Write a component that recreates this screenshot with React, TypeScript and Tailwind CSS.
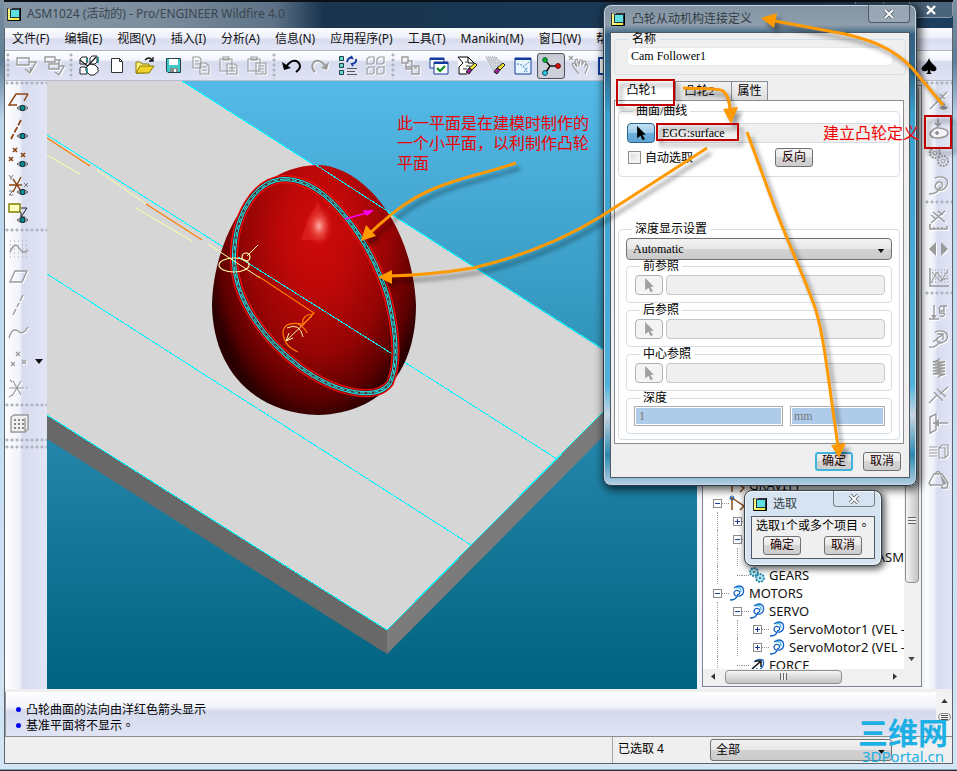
import React from "react";

const ui = "font-['Noto_Sans','Noto_Sans_CJK_SC',sans-serif]";
const ming = "font-['Liberation_Serif','Noto_Sans_CJK_SC',serif]";

type IconProps = { children: React.ReactNode };

function Icon({ children }: IconProps) {
  return (
    <svg viewBox="0 0 22 22" className="h-[22px] w-[22px] shrink-0" fill="none">
      {children}
    </svg>
  );
}

/** Disabled, embossed line icon. */
function Gray({ d, fill, w = 1.4 }: { d: string; fill?: string; w?: number }) {
  return (
    <Icon>
      <g transform="translate(1 1)" stroke="#fff" strokeWidth={w}>
        <path d={d} />
        {fill && <path d={fill} fill="#fff" stroke="none" />}
      </g>
      <g stroke="#9b9b9b" strokeWidth={w}>
        <path d={d} />
        {fill && <path d={fill} fill="#9b9b9b" stroke="none" />}
      </g>
    </Icon>
  );
}

function Eye() {
  return (
    <g>
      <path d="M9 17Q14.500 12 20 17Q14.500 22 9 17Z" fill="#e4e4e4" stroke="#555" strokeWidth="1" />
      <circle cx="14.5" cy="17" r="2.6" fill="#009090" stroke="#123" strokeWidth="1" />
    </g>
  );
}

function WindowMark() {
  return (
    <svg viewBox="0 0 14 14" className="h-[14px] w-[14px] shrink-0">
      <rect x="0.5" y="1.5" width="12" height="12" fill="#f6ee4c" stroke="#333" />
      <path d="M2 1V13M4 1V13" stroke="#fff" strokeWidth="1" strokeDasharray="1 1" />
      <rect x="3.5" y="2.5" width="9" height="8" fill="#5fe0e0" stroke="#234" />
      <path d="M13.5 1V13.5H1" stroke="#000" fill="none" />
    </svg>
  );
}

function ToolButton({ label, children, active = false }: { label: string; children: React.ReactNode; active?: boolean }) {
  return (
    <button
      type="button"
      aria-label={label}
      className={
        active
          ? "flex h-[26px] w-7 shrink-0 items-center justify-center rounded-[3px] border border-[#50545e] bg-[#cdd0d8] shadow-inner"
          : "flex h-7 w-7 shrink-0 items-center justify-center"
      }
    >
      {children}
    </button>
  );
}

function VGrip() {
  return (
    <div className="h-[26px] w-[7px] shrink-0 bg-[radial-gradient(circle_at_3px_2px,#b0b4be_1px,transparent_2px)] bg-[length:7px_5px]" />
  );
}

function HGrip() {
  return (
    <div className="h-[7px] w-full shrink-0 bg-[radial-gradient(circle_at_2px_2px,#b0b4be_1px,transparent_2px)] bg-[length:5px_7px]" />
  );
}

const menus = ["文件(F)", "编辑(E)", "视图(V)", "插入(I)", "分析(A)", "信息(N)", "应用程序(P)", "工具(T)", "Manikin(M)", "窗口(W)", "帮助(H)"];

function TitleBar() {
  return (
    <header className="flex h-[28px] items-start justify-between border-t-2 border-[#0b0f16] bg-[linear-gradient(90deg,#8496a6_0,#7c8d9d_150px,#5d7287_270px,#18344f_320px,#1d3f5e_100%)]">
      <div className="flex h-6 items-center gap-[6px] pl-[3px]">
        <WindowMark />
        <h1 className="text-[12px] leading-4 whitespace-nowrap text-[#3b4650]">ASM1024 (活动的) - Pro/ENGINEER Wildfire 4.0</h1>
      </div>
      <div className="flex h-4 overflow-hidden rounded-b border border-t-0 border-[#8b9bab] text-white">
        <button type="button" aria-label="最小化" className="w-7 border-r border-[#8b9bab] bg-[#34516b]" />
        <button type="button" aria-label="最大化" className="w-[26px] border-r border-[#8b9bab] bg-[#34516b]" />
        <button type="button" aria-label="关闭" className="flex w-[42px] items-center justify-center bg-[#4a647c]">
          <svg viewBox="0 0 12 10" className="h-[10px] w-3">
            <path d="M2 1L10 9M10 1L2 9" stroke="#fff" strokeWidth="2.4" />
          </svg>
        </button>
      </div>
    </header>
  );
}

function MenuBar() {
  return (
    <nav className="flex h-[23px] items-center gap-[15px] overflow-hidden border-b border-[#adb1c0] bg-[linear-gradient(#fbfcff,#eef0fa_45%,#d8dcee_50%,#e4e7f6)] pl-[7px]">
      {menus.map((m) => (
        <button key={m} type="button" className="text-[12px] leading-4 whitespace-nowrap text-[#111]">
          {m}
        </button>
      ))}
    </nav>
  );
}

function ToolBar() {
  return (
    <div className="flex h-[30px] items-center border-b border-[#b9bccb] bg-[linear-gradient(#fff,#f3f5fc_30%,#d6dbee_38%,#dfe3f4)]">
      <VGrip />
      <ToolButton label="选择">
        <Gray d="M2 3H14V10H2ZM14 7H21L15 18L10 14M15 18L16 12" />
      </ToolButton>
      <ToolButton label="多选">
        <Gray d="M2 2H12V7H2ZM6 9H16V14H6ZM12 5H17L15 9M16 11H21L16 20L12 17" />
      </ToolButton>
      <VGrip />
      <ToolButton label="拖动元件">
        <Icon>
          <path d="M4 2H9V8L7 9H2V4ZM14 1H19V7L17 9H12V3ZM3 12H7L9 14V19H2V13Z" fill="#fff" stroke="#222" />
          <path d="M2 5L12 13M18 2L9 12" stroke="#222" strokeWidth="1.3" />
          <path d="M8 13L12 9L17 10L20 13V17L16 20H12L8 16Z" fill="#fff" stroke="#222" />
          <path d="M20 2V8M9 13V18M9 3V7" stroke="#008080" strokeWidth="1.5" />
        </Icon>
      </ToolButton>
      <ToolButton label="新建">
        <Icon>
          <path d="M5.500 3.500H13.500L16.500 6.500V17.500H5.500Z" fill="#fff" stroke="#333" />
          <path d="M13.500 3.500V6.500H16.500" stroke="#333" />
        </Icon>
      </ToolButton>
      <ToolButton label="打开">
        <Icon>
          <path d="M2 7H6L8 9H15V12L11 18H2Z" fill="#fff27c" stroke="#8b7a00" />
          <path d="M6 11H20L15 18H2Z" fill="#efd32c" stroke="#8b7a00" />
          <path d="M11 5Q15 1 18 5M19 2V6H15" stroke="#111" strokeWidth="1.3" />
        </Icon>
      </ToolButton>
      <ToolButton label="保存">
        <Icon>
          <path d="M4.500 3.500H18.500V17.500H6L4.500 16Z" fill="#3ccaca" stroke="#244" />
          <path d="M7 4H16V10H7Z" fill="#fff" />
          <path d="M8 13H16V17H8Z" fill="#8a8a8a" />
          <path d="M12 14H14V17H12Z" fill="#fff" />
        </Icon>
      </ToolButton>
      <ToolButton label="复制">
        <Gray w={1.1} d="M3 2H9L11 4V13H3ZM5 6H9M5 9H9M10 8H16L19 11V19H10ZM12 12H17M12 15H17" />
      </ToolButton>
      <ToolButton label="粘贴">
        <Gray w={1.1} d="M2 4H14V16H2ZM5 2H11V5H5ZM9 9H17L19 11V19H9ZM11 13H17M11 16H17" />
      </ToolButton>
      <ToolButton label="选择性粘贴">
        <Gray w={1.1} d="M2 4H14V16H2ZM5 2H11V5H5ZM10 8H20V19H10ZM12 11H13M15 11H18M12 14H13M15 14H18M12 17H13M15 17H18" />
      </ToolButton>
      <VGrip />
      <ToolButton label="撤消">
        <Icon>
          <path d="M5 12Q11 3 17 7Q22 12 15 17" stroke="#000" strokeWidth="2" />
          <path d="M1 7L3 15L10 13Z" fill="#000" />
        </Icon>
      </ToolButton>
      <ToolButton label="重做">
        <Gray d="M17 12Q11 3 5 7Q1 12 6 17" fill="M20 7L18 15L12 13Z" w={2} />
      </ToolButton>
      <ToolButton label="再生">
        <Icon>
          <path d="M2.500 1.500H6.500V5.500H2.500ZM2.500 8.500H6.500V12.500H2.500ZM2.500 15.500H6.500V19.500H2.500Z" fill="#62d8d8" stroke="#244" />
          <path d="M10 7Q11 2 15 3L14 1M19 4Q20 8 15 9L16 11" stroke="#14389c" strokeWidth="2" />
          <path d="M10 13.500H20M10 16.500H18M10 19.500H20" stroke="#555" />
        </Icon>
      </ToolButton>
      <ToolButton label="再生管理器">
        <Gray w={1.2} d="M4 2H9V8L7 9H2V4ZM14 2H19V8L17 9H12V4ZM4 12H9V18L7 19H2V14ZM14 12H19V18L17 19H12V14Z" />
      </ToolButton>
      <VGrip />
      <ToolButton label="视图管理">
        <Gray d="M2 2H8V8H2ZM8 6H12V14H6V8M6 12H12M12 11H19V19H12ZM14 13H17" />
      </ToolButton>
      <ToolButton label="窗口">
        <Icon>
          <path d="M2 3H16V13H2Z" fill="#fff" stroke="#113a9a" />
          <path d="M2 4H16" stroke="#113a9a" strokeWidth="2" />
          <path d="M6 7H20V19H6Z" fill="#fff" stroke="#113a9a" />
          <path d="M6 8H20" stroke="#113a9a" strokeWidth="2" />
          <path d="M9 13L12 16L17 11" stroke="#0a8a1a" strokeWidth="2" />
        </Icon>
      </ToolButton>
      <ToolButton label="重画">
        <Icon>
          <path d="M2 2H12L18 8V11L10 19H2Z" fill="#fff" stroke="none" />
          <path d="M2 2H12L18 8H12V2M2 2L7 8L3 12V19H11" stroke="#000" />
          <path d="M9 7H11M10 11H14M7 14H11" stroke="#333" />
          <path d="M19 8L21 10L16 15L13 13Z" fill="#f2e32c" stroke="#222" />
          <path d="M13 13L16 15L13 19L10 17Z" fill="#a020a0" stroke="#222" />
        </Icon>
      </ToolButton>
      <ToolButton label="清除">
        <Icon>
          <path d="M2 2H12L18 8L11 18Z" fill="#d3d6df" stroke="#999" strokeDasharray="1 1" />
          <path d="M5 5H13M7 8H16M9 11H14M10 14H12" stroke="#aaa" strokeDasharray="1 1" />
          <path d="M19 8L21 10L16 15L13 13Z" fill="#f2e32c" stroke="#222" />
          <path d="M13 13L16 15L13 19L10 17Z" fill="#a020a0" stroke="#222" />
        </Icon>
      </ToolButton>
      <ToolButton label="定向">
        <Icon>
          <path d="M3 3H19V19H3Z" fill="#e8f4ff" stroke="#113a9a" />
          <path d="M3 4H19" stroke="#113a9a" strokeWidth="2" />
          <path d="M5 9Q12 9 15 17M17 7L10 13M12 17L16 12" stroke="#3c86c8" strokeDasharray="2 1" />
        </Icon>
      </ToolButton>
      <ToolButton label="旋转中心" active>
        <Icon>
          <path d="M5 5L10 11H18M10 11L6 17" stroke="#111" strokeWidth="1.5" />
          <circle cx="5" cy="5" r="2.4" fill="#10b020" stroke="#064" />
          <circle cx="18" cy="11" r="2.4" fill="#e01010" stroke="#600" />
          <circle cx="5" cy="18" r="2.4" fill="#30d0e0" stroke="#046" />
        </Icon>
      </ToolButton>
      <ToolButton label="拖动">
        <Gray w={1.2} d="M1 1L5 5M5 1L1 5M11 19L6 13L4 9L6 8L9 12L7 5L9 4L11 10L12 5H14V10L16 6L18 7L17 11L19 9L20 11L17 19" />
      </ToolButton>
      <ToolButton label="图层">
        <Icon>
          <path d="M3 3H19V19H3Z" fill="#fff" stroke="#113a9a" strokeWidth="2" />
        </Icon>
      </ToolButton>
      <div className="flex-1" />
      <button type="button" aria-label="黑桃" className="mr-[15px]">
        <svg viewBox="0 0 16 16" className="h-4 w-4">
          <path d="M8 0Q9 4 14 8Q17 11 14 13Q11 14 9 12Q9 15 11 16H5Q7 15 7 12Q5 14 2 13Q-1 11 2 8Q7 4 8 0Z" fill="#000" />
        </svg>
      </button>
    </div>
  );
}

function LeftBar() {
  return (
    <aside className="flex w-[42px] shrink-0 flex-col bg-[linear-gradient(90deg,#fff,#f0f2fb_35%,#d8dcef_42%,#e2e5f6)]">
      <HGrip />
      <ToolButton label="基准平面">
        <Icon>
          <path d="M20 3H8L1 14H9M20 3L16 10" stroke="#8b4513" strokeWidth="1.5" />
          <Eye />
        </Icon>
      </ToolButton>
      <ToolButton label="基准轴">
        <Icon>
          <path d="M13 1L3 20" stroke="#8b4513" strokeWidth="1.8" strokeDasharray="6 2" />
          <Eye />
        </Icon>
      </ToolButton>
      <ToolButton label="基准点">
        <Icon>
          <path d="M5 1L9 5M9 1L5 5M1 10L5 14M5 10L1 14M13 6L17 10M17 6L13 10" stroke="#8b4513" strokeWidth="1.6" />
          <Eye />
        </Icon>
      </ToolButton>
      <ToolButton label="坐标系">
        <Icon>
          <path d="M1 10H14M13 2L5 17M5 4L13 16" stroke="#8b4513" strokeWidth="1.4" />
          <path d="M1 0L3 3L5 0M3 3V5M1 16H5L1 20H5M16 8L20 12M20 8L16 12" stroke="#777" />
          <Eye />
        </Icon>
      </ToolButton>
      <ToolButton label="注释">
        <Icon>
          <path d="M1 1H12V9H1Z" fill="#ffffc0" stroke="#7d7d00" strokeWidth="1.4" />
          <path d="M13 5H19L13 14M13 9V14H17" stroke="#222" />
          <Eye />
        </Icon>
      </ToolButton>
      <HGrip />
      <ToolButton label="草绘">
        <Icon>
          <path d="M2 3H20M2 7H20M2 11H20M2 15H20M2 19H20" stroke="#a5a5a5" strokeDasharray="1 3" />
          <path d="M2 14Q7 3 11 10T20 12" stroke="#9b9b9b" strokeWidth="1.5" />
        </Icon>
      </ToolButton>
      <ToolButton label="平面">
        <Gray d="M7 5H19L14 16H2Z" />
      </ToolButton>
      <ToolButton label="轴">
        <Gray d="M15 1L12 7M11 9L9 13M8 15L5 21" />
      </ToolButton>
      <ToolButton label="曲线">
        <Gray d="M1 16Q4 5 10 9Q15 14 20 5" />
      </ToolButton>
      <div className="flex items-center">
        <ToolButton label="点">
          <Gray d="M8 2L12 6M12 2L8 6M3 12L7 16M7 12L3 16M14 10L18 14M18 10L14 14" />
        </ToolButton>
        <svg viewBox="0 0 8 5" className="ml-[2px] h-[5px] w-2">
          <path d="M0 0H8L4 5Z" fill="#111" />
        </svg>
      </div>
      <ToolButton label="坐标">
        <Gray d="M1 10H16M13 3L4 18M5 3L13 17M2 2L4 4M18 10H20M1 19L4 17" w={1.2} />
      </ToolButton>
      <HGrip />
      <ToolButton label="分析">
        <Icon>
          <path d="M3 4L6 2H20V16L17 19H3ZM17 5V19" stroke="#999" strokeWidth="1.4" fill="#f0f0f0" />
          <path d="M6 7H16M6 11H16M6 15H16" stroke="#888" strokeWidth="2" strokeDasharray="2 2" />
        </Icon>
      </ToolButton>
      <HGrip />
      <HGrip />
    </aside>
  );
}

function RightBar() {
  return (
    <aside className="flex w-[27px] shrink-0 flex-col items-center bg-[linear-gradient(90deg,#fff,#eceffa_35%,#d8dcef_45%,#e2e5f6)]">
      <HGrip />
      <ToolButton label="机构显示">
        <Gray d="M19 1L2 18M6 4L17 14M12 3L17 8" fill="M11 17Q15 12 20 17Q15 21 11 17" />
      </ToolButton>
      <ToolButton label="凸轮">
        <Icon>
          <path d="M10 0V7M7 4L10 7L13 4" stroke="#999" strokeWidth="1.6" />
          <path d="M4 12Q7 8 11 9Q20 10 20 14Q19 19 9 19Q3 19 2 15Q2 13 4 12Z" fill="#f4f4f8" stroke="#999" strokeWidth="1.5" />
          <path d="M7 14H11M9 12V16" stroke="#999" strokeWidth="2" />
        </Icon>
      </ToolButton>
      <ToolButton label="齿轮">
        <Icon>
          <circle cx="7" cy="6" r="5" stroke="#999" strokeWidth="2" strokeDasharray="2 1" />
          <circle cx="7" cy="6" r="2" stroke="#999" />
          <circle cx="15" cy="14" r="5" stroke="#999" strokeWidth="2" strokeDasharray="2 1" />
          <circle cx="15" cy="14" r="2" stroke="#999" />
        </Icon>
      </ToolButton>
      <ToolButton label="伺服电动机">
        <Gray d="M1 19Q10 19 12 12M7 3Q15 0 19 5Q21 12 14 15Q8 16 7 11Q9 5 14 8Q16 12 11 14" />
      </ToolButton>
      <HGrip />
      <ToolButton label="机构分析">
        <Gray w={1.6} d="M2 14V19H19V16M6 17V19M10 17V19M14 17V19M17 1L3 13M5 2L17 12M10 1L15 5M3 5L8 9" />
      </ToolButton>
      <ToolButton label="回放">
        <Gray d="" fill="M8 4V18L1 11ZM13 4V18L20 11Z" w={1} />
      </ToolButton>
      <ToolButton label="测量">
        <Icon>
          <path d="M2 2V20H21" stroke="#999" strokeWidth="1.5" />
          <path d="M4 4H20M4 7H20M4 10H20M4 13H20M4 16H20" stroke="#999" strokeDasharray="1 2" />
          <path d="M3 17L9 6L14 14L20 4M4 6L12 15L20 12" stroke="#999" />
        </Icon>
      </ToolButton>
      <HGrip />
      <ToolButton label="重力">
        <Gray d="M6 4V17M1 18H11M19 5H13Q10 8 12 10H16V5M12 10Q10 13 16 12Q18 16 12 15" fill="M3 14H9L6 18Z" />
      </ToolButton>
      <ToolButton label="执行电动机">
        <Gray d="M1 18Q9 19 12 12M7 3Q15 0 19 5Q21 12 13 14Q8 13 9 9M5 13L14 6M9 5H15V11" />
      </ToolButton>
      <ToolButton label="弹簧">
        <Gray d="M11 1V3L5 5H17L5 8H17L5 11H17L5 14H17L5 17H17L11 19V21" />
      </ToolButton>
      <ToolButton label="阻尼器">
        <Gray d="M1 18L9 10M6 7L15 16M9 4L18 12M12 9L20 2" />
      </ToolButton>
      <ToolButton label="力">
        <Gray d="M2 4L8 1V17L2 20ZM5 10H20" fill="M6 10L11 6V14Z" />
      </ToolButton>
      <ToolButton label="初始条件">
        <Gray d="M11 7L14 4H20V14L17 17H11ZM11 7H17V17M1 6H9M1 9H9M1 12H9M1 15H9" w={1.1} />
      </ToolButton>
      <ToolButton label="质量属性">
        <Gray d="M3 17L1 14L6 5H14L20 14L19 19H14V16H3M7 5Q10 0 13 5" fill="M12 5L19 15L15 16Z" />
      </ToolButton>
    </aside>
  );
}

const band =
  "M285 179C330 180 372 245 388 298C397 335 398 365 390 383C378 400 340 396 300 367C262 338 236 300 234 262C233 215 255 180 285 179Z";

function Viewport() {
  return (
    <svg viewBox="47 81 650 608" preserveAspectRatio="xMinYMin slice" className="h-full min-w-0 flex-1" fill="none">
      <defs>
        <linearGradient id="sky" x1="0" y1="0" x2="0" y2="1">
          <stop offset="0" stopColor="#56bae8" />
          <stop offset="1" stopColor="#00627f" />
        </linearGradient>
        <radialGradient id="egg" gradientUnits="userSpaceOnUse" cx="318" cy="232" r="190" gradientTransform="translate(318 232) scale(.6 1) translate(-318 -232)">
          <stop offset="0" stopColor="#cf0b0b" />
          <stop offset=".3" stopColor="#bf0808" />
          <stop offset=".65" stopColor="#940404" />
          <stop offset=".88" stopColor="#5c0000" />
          <stop offset="1" stopColor="#2a0000" />
        </radialGradient>
        <radialGradient id="shine">
          <stop offset="0" stopColor="#ffb0a8" />
          <stop offset=".4" stopColor="#ee5048" stopOpacity=".8" />
          <stop offset="1" stopColor="#cf0b0b" stopOpacity="0" />
        </radialGradient>
      </defs>
      <path d="M47 81H697V689H47Z" fill="url(#sky)" />
      <path d="M47 81H182L697 410V317L387 630L47 415Z" fill="#d6d6d6" />
      <path d="M47 415L387 630V654L47 439Z" fill="#686868" />
      <path d="M387 630L697 317V342L387 654Z" fill="#7b7b7b" />
      <g stroke="#00ffff" strokeWidth="1" shapeRendering="crispEdges">
        <path d="M182 81L697 409M47 415L387 630L697 317" />
        <path d="M47 135L557 459M47 274L471 545" />
      </g>
      <path d="M318 165C362 166 412 222 416 305C416 368 384 413 318 415C252 413 213 368 212 305C213 248 246 166 318 165Z" fill="url(#egg)" />
      <path d="M318 202L328 226L324 240L301 240L308 220Z" fill="#e22a24" opacity=".6" />
      <ellipse cx="319" cy="226" rx="15" ry="22" fill="url(#shine)" />
      <path d="M316 165L392 214M232 253L394 355" stroke="#00f0f8" shapeRendering="crispEdges" />
      <path d={band} stroke="#ff1010" strokeWidth="8" />
      <path d={band} stroke="#8c0606" strokeWidth="6" />
      <path d={band} stroke="#14f0f4" strokeWidth="4" />
      <path d={band} stroke="#5a1414" strokeWidth="2" />
      <path d={band} stroke="#14f0f4" strokeWidth="1" strokeDasharray="5 2" />
      <g stroke="#ffffa8" strokeWidth="1">
        <path d="M47 155L80 174M97 170L146 204M136 208L192 241M208 244L260 278M247 256L258 245" />
        <ellipse cx="234" cy="265" rx="15" ry="7" strokeWidth="1.2" />
        <circle cx="246" cy="257" r="4" strokeWidth="1.2" />
        <path d="M286 341L312 316M287 328Q300 322 303 337M286 341L293 338M286 341L289 333" />
      </g>
      <g stroke="#ff7f00" strokeWidth="1.2">
        <path d="M47 138L90 166M146 204L202 240M258 276L314 313L303 325Q301 315 313 314M302 324Q285 321 283 331Q283 346 298 352M298 324Q305 328 307 333" />
      </g>
      <path d="M345 219L370 212M364 211L372 211L367 215Z" stroke="#ff00ff" strokeWidth="1.3" />
    </svg>
  );
}

function MotorIcon() {
  return (
    <svg viewBox="0 0 16 16" className="h-4 w-4 shrink-0" fill="none" stroke="#1464c8" strokeWidth="1.3">
      <path d="M1 15Q7 15 8 11M5 3Q11 -1 14 3Q16 9 11 11Q5 12 5 8Q6 4 10 6Q12 9 8 10" />
      <path d="M7 3Q12 1 12 7" stroke="#4db6e8" />
    </svg>
  );
}

function GearIcon() {
  return (
    <svg viewBox="0 0 16 16" className="h-4 w-4 shrink-0" fill="none">
      <circle cx="5" cy="5" r="4" fill="#a8e4f0" stroke="#167aa0" strokeWidth="1.6" strokeDasharray="2 1" />
      <circle cx="11" cy="11" r="4" fill="#a8e4f0" stroke="#167aa0" strokeWidth="1.6" strokeDasharray="2 1" />
      <path d="M5 4V6M11 10V12" stroke="#024" />
    </svg>
  );
}

function ForceIcon() {
  return (
    <svg viewBox="0 0 16 16" className="h-4 w-4 shrink-0" fill="none">
      <path d="M1 15Q7 15 8 11M5 5Q9 1 14 3Q16 9 11 12" stroke="#1464c8" strokeWidth="1.3" />
      <path d="M3 12L11 5M6 4H12V10" stroke="#111" strokeWidth="1.5" />
    </svg>
  );
}

function LinkIcon() {
  return (
    <svg viewBox="0 0 16 16" className="h-4 w-4 shrink-0" fill="none">
      <path d="M3 3V15M1 3H5M3 3L15 11L11 15" stroke="#8a4a12" strokeWidth="1.5" />
      <circle cx="3" cy="3" r="2" stroke="#1464c8" />
    </svg>
  );
}

function Toggle({ open }: { open: boolean }) {
  return (
    <button type="button" aria-label={open ? "折叠" : "展开"} className="flex h-[9px] w-[9px] shrink-0 items-center justify-center border border-[#8c8c8c] bg-white">
      <svg viewBox="0 0 5 5" className="h-[5px] w-[5px] shrink-0" shapeRendering="crispEdges">
        <path d={open ? "M0 2H5V3H0Z" : "M0 2H2V0H3V2H5V3H3V5H2V3H0Z"} fill="#1a3c9a" />
      </svg>
    </button>
  );
}

type Row = { indent: number; toggle?: boolean; icon: React.ReactNode; text: string; end?: boolean };

const rows: Row[] = [
  { indent: 0, icon: <LinkIcon />, text: "GRAVITY" },
  { indent: 0, toggle: true, icon: <LinkIcon />, text: "" },
  { indent: 1, toggle: false, icon: <LinkIcon />, text: "" },
  { indent: 1, toggle: true, icon: <LinkIcon />, text: "" },
  { indent: 2, icon: <MotorIcon />, text: "ASM", end: true },
  { indent: 1, icon: <GearIcon />, text: "GEARS" },
  { indent: 0, toggle: true, icon: <MotorIcon />, text: "MOTORS" },
  { indent: 1, toggle: true, icon: <MotorIcon />, text: "SERVO" },
  { indent: 2, toggle: false, icon: <MotorIcon />, text: "ServoMotor1 (VEL - ASM)" },
  { indent: 2, toggle: false, icon: <MotorIcon />, text: "ServoMotor2 (VEL - ASM)" },
  { indent: 1, icon: <ForceIcon />, text: "FORCE" },
];

const guide = "w-5 shrink-0 self-stretch bg-[linear-gradient(#999,#999)]";

function ModelTree() {
  return (
    <section className="flex w-[228px] shrink-0 flex-col bg-[#f2f4fb] pt-1 pr-[3px] pb-[2px] pl-[5px]">
      <div className="grid min-h-0 flex-1 grid-cols-[1fr_15px] grid-rows-[1fr_15px] border border-[#808590] bg-[#f0f0f0] pr-[2px] pb-[2px]">
        <div className="flex min-h-0 min-w-0 flex-col justify-end overflow-hidden bg-white">
          <ul className="-mb-[5px]">
            {rows.map((r, i) => (
              <li key={i} className="flex h-[18px] items-center pl-[10px]">
                {Array.from({ length: r.indent }, (_, n) => (
                  <span key={n} className="w-5 shrink-0 self-stretch pl-1">
                    <span className={n === 0 || i < 10 ? "block h-full w-px border-l border-dotted border-[#a0a0a0]" : guide} />
                  </span>
                ))}
                {r.toggle === undefined ? <span className="ml-1 w-[5px] shrink-0 border-b border-dotted border-[#909090]" /> : <Toggle open={r.toggle} />}
                <span className="w-[7px] shrink-0 border-b border-dotted border-[#909090]" />
                {r.icon}
                <span className={r.end ? "ml-auto text-[13px] leading-[18px] text-[#111]" : "ml-1 text-[13px] leading-[18px] whitespace-nowrap text-[#111]"}>{r.text}</span>
              </li>
            ))}
          </ul>
        </div>
        <div className="flex flex-col items-center justify-end bg-[#f0f0f0]">
          <div className="flex min-h-0 w-[14px] flex-1 items-end justify-center rounded-sm border border-[#8f8f8f] bg-[linear-gradient(90deg,#f6f6f6,#dcdcdc_50%,#c4c4c4)]">
            <span className="mb-[58px] h-[7px] w-2 bg-[repeating-linear-gradient(#666_0_1px,#eee_1px_3px)]" />
          </div>
          <svg viewBox="0 0 8 5" className="mt-[74px] mb-2 h-[4px] w-[7px]">
            <path d="M0 0H8L4 5Z" fill="#444" />
          </svg>
        </div>
        <div className="flex items-center pl-2">
          <svg viewBox="0 0 5 8" className="h-[7px] w-[4px]">
            <path d="M5 0V8L0 4Z" fill="#333" />
          </svg>
          <div className="ml-[10px] flex h-[14px] w-[117px] items-center justify-center rounded-sm border border-[#8f8f8f] bg-[linear-gradient(#f6f6f6,#dcdcdc_50%,#c4c4c4)]">
            <span className="h-[7px] w-[7px] bg-[repeating-linear-gradient(90deg,#666_0_1px,#eee_1px_3px)]" />
          </div>
          <svg viewBox="0 0 5 8" className="mr-[7px] ml-auto h-[7px] w-[4px]">
            <path d="M0 0V8L5 4Z" fill="#333" />
          </svg>
        </div>
      </div>
    </section>
  );
}

function Messages() {
  return (
    <section className="mt-[3px] flex h-[44px] shrink-0 border-l border-[#9a9a9a] bg-[linear-gradient(#fff,#f1f3fb_35%,#d5daec_42%,#e0e4f4)]">
      <ul className="flex-1 pt-[9px] pl-[10px] text-[12px] leading-4 text-black">
        {["凸轮曲面的法向由洋红色箭头显示", "基准平面将不显示。"].map((t) => (
          <li key={t} className="flex items-center gap-[5px]">
            <i className="h-[5px] w-[5px] rounded-full bg-[#0000f0]" />
            <span className="font-['Noto_Sans_CJK_TC',sans-serif]">{t}</span>
          </li>
        ))}
      </ul>
      <div className="flex w-4 flex-col items-center gap-[10px] bg-[#f2f2f2] pt-[7px]">
        <svg viewBox="0 0 8 5" className="h-[4px] w-[7px]">
          <path d="M0 5H8L4 0Z" fill="#333" />
        </svg>
        <span className="flex h-2 w-[13px] items-center justify-center rounded-sm border border-[#888]">
          <i className="h-[5px] w-[7px] bg-[repeating-linear-gradient(#555_0_1px,#eee_1px_2px)]" />
        </span>
      </div>
    </section>
  );
}

function StatusBar() {
  return (
    <footer className="flex h-[27px] shrink-0 items-center border-t border-[#8c8c8c] bg-[#efefef]">
      <div className="flex-1" />
      <output className="flex h-full w-[98px] items-center border-l border-[#a5a5a5] pb-[3px] pl-[5px] text-[12px] leading-4 text-black">已选取 4</output>
      <label className="relative mr-[60px] flex h-[22px] w-[182px]">
        <span className="sr-only">过滤器</span>
        <select className="h-full w-full appearance-none rounded-[3px] border border-[#707070] bg-[linear-gradient(#f3f3f3,#e6e6e6_50%,#d2d2d2_50%,#cacaca)] pl-[5px] text-[12px] leading-4 text-black">
          <option>全部</option>
        </select>
        <svg viewBox="0 0 8 5" className="pointer-events-none absolute top-[11px] right-[7px] h-[4px] w-[7px]">
          <path d="M0 0H8L4 5Z" fill="#111" />
        </svg>
      </label>
    </footer>
  );
}

function CloseGlyph() {
  return (
    <svg viewBox="0 0 12 10" className="h-[10px] w-3">
      <path d="M2 1L10 9M10 1L2 9" stroke="#5a6570" strokeWidth="3.6" />
      <path d="M2 1L10 9M10 1L2 9" stroke="#fff" strokeWidth="1.8" />
    </svg>
  );
}

function PushButton({ children, primary = false }: { children: React.ReactNode; primary?: boolean }) {
  return (
    <button
      type="button"
      className={
        primary
          ? "h-[19px] w-[38px] rounded-[3px] border-2 border-[#3eb4dc] bg-[linear-gradient(#f0f0f0,#e4e4e4_50%,#d0d0d0_50%,#cfcfcf)] text-[12px] leading-[15px] text-[#200]"
          : "h-[19px] w-[38px] rounded-[3px] border border-[#707070] bg-[linear-gradient(#f3f3f3,#e9e9e9_50%,#d6d6d6_50%,#cdcdcd)] text-[12px] leading-[17px] text-[#200]"
      }
    >
      {children}
    </button>
  );
}

function PickButton({ active = false, label }: { active?: boolean; label: string }) {
  return (
    <button
      type="button"
      aria-label={label}
      disabled={!active}
      className={
        active
          ? "flex h-5 w-7 shrink-0 items-center justify-center rounded-sm border border-[#2c628b] bg-[linear-gradient(#c2e0f4,#9ccbea_50%,#6cb0de_50%,#5fa4d4)]"
          : "flex h-5 w-7 shrink-0 items-center justify-center rounded-sm border border-[#adb2b5] bg-[#f4f4f4]"
      }
    >
      <svg viewBox="0 0 10 16" className="h-[14px] w-[9px]">
        <path d="M0 0L10 10H6L9 15L6 16L4 11L0 14Z" fill={active ? "#000" : "#a0a0a0"} />
      </svg>
    </button>
  );
}

function RefGroup({ title, id }: { title: string; id: string }) {
  return (
    <fieldset className="mb-px h-[43px] min-w-0 rounded border border-[#d5dfe5] pr-[6px] pl-2">
      <legend className="ml-[5px] px-[3px] text-[12px] leading-3">{title}</legend>
      <div className="mt-[3px] flex gap-[3px]">
        <PickButton label={title} />
        <input id={id} aria-label={title} disabled className="h-5 min-w-0 flex-1 rounded-sm border border-[#c3c8cc] bg-[#efefef]" />
      </div>
    </fieldset>
  );
}

function CamDialog() {
  return (
    <section
      role="dialog"
      aria-label="凸轮从动机构连接定义"
      className={`absolute top-1 left-[603px] w-[314px] rounded-lg border border-[#2b3a48] bg-[linear-gradient(#8293a3_0,#8e9eac_20px,#35607f_30px,#2f6d93_70px,#39a0cc_110px,#4fb2dc_380px,#c9d6e2_410px,#2b88b0_450px,#b5cfe4_100%)] px-[6px] pb-[7px] shadow-[inset_0_0_0_1px_#c6d5e2,2px_2px_8px_2px_rgba(0,0,0,0.65)] ${ming}`}
    >
      <div className="flex h-[27px] items-start justify-between">
        <div className={`flex h-[27px] items-center gap-[7px] pl-[1px] ${ui}`}>
          <WindowMark />
          <h2 className="text-[12px] leading-4 text-[#343c44]">凸轮从动机构连接定义</h2>
        </div>
        <button type="button" aria-label="关闭" className="flex h-[18px] w-[42px] items-center justify-center rounded-b border border-t-0 border-[#4f5c68] bg-[#a5b2be]/60">
          <CloseGlyph />
        </button>
      </div>
      <div className="border border-[#505a64] bg-[#efefef] px-[3px] pb-[6px] text-[12px] text-black">
        <fieldset className="h-[42px] min-w-0 rounded border border-[#d5dfe5] px-3">
          <legend className="ml-[2px] px-[3px] text-[12px] leading-3">名称</legend>
          <input aria-label="名称" defaultValue="Cam Follower1" className="mt-[2px] block h-[19px] w-full rounded-sm border border-[#e3e9ef] bg-white px-[3px] text-[12px] leading-4" />
        </fieldset>
        <div role="tablist" className="mt-[5px] flex h-5 items-end pl-[2px]">
          <button role="tab" aria-selected="true" type="button" className="h-5 w-[59px] bg-white pr-[8px] text-[12px] leading-4">凸轮1</button>
          <button role="tab" aria-selected="false" type="button" className="h-[19px] w-[57px] border border-b-0 border-[#898c95] bg-[linear-gradient(#f2f2f2,#ddd)] pr-[8px] text-[12px] leading-4">凸轮2</button>
          <button role="tab" aria-selected="false" type="button" className="h-[19px] w-[36px] border border-b-0 border-l-0 border-[#898c95] bg-[linear-gradient(#f2f2f2,#ddd)] text-[12px] leading-4">属性</button>
        </div>
        <div role="tabpanel" className="mr-[2px] border border-[#898c95] bg-white px-[3px] pt-1 pb-[3px]">
          <fieldset className="h-[72px] min-w-0 rounded border border-[#d5dfe5] pr-2 pl-2">
            <legend className="ml-[6px] px-[3px] text-[12px] leading-3">曲面/曲线</legend>
            <div className="mt-[6px] flex gap-[2px]">
              <PickButton active label="选取曲面" />
              <input aria-label="曲面/曲线" readOnly value="EGG:surface" className="h-5 min-w-0 flex-1 rounded-sm border border-[#d5dbe2] bg-[#f0f0f0] px-1 text-[12px] leading-4" />
            </div>
            <div className="mt-[5px] flex items-center">
              <label className="flex w-[148px] items-center gap-1 leading-4">
                <input type="checkbox" className="ml-[1px] h-[13px] w-[13px] appearance-none border border-[#8e8f8f] bg-[linear-gradient(135deg,#cfd3d8,#fff)] shadow-[inset_0_0_0_2px_#f4f4f4]" />
                自动选取
              </label>
              <PushButton>反向</PushButton>
            </div>
          </fieldset>
          <fieldset className="mt-[46px] min-w-0 rounded border border-[#d5dfe5] px-[7px] pb-[5px]">
            <legend className="ml-[6px] px-[3px] text-[12px] leading-3">深度显示设置</legend>
            <div className="relative mt-[3px]">
              <select aria-label="深度显示设置" className="block h-[22px] w-full appearance-none rounded-sm border border-[#707070] bg-[linear-gradient(#f3f3f3,#e6e6e6_50%,#d4d4d4_50%,#cacaca)] pl-[6px] text-[12px] leading-4">
                <option>Automatic</option>
              </select>
              <svg viewBox="0 0 8 5" className="pointer-events-none absolute top-[11px] right-[7px] h-[4px] w-2">
                <path d="M0 0H8L4 5Z" fill="#111" />
              </svg>
            </div>
            <RefGroup title="前参照" id="front" />
            <RefGroup title="后参照" id="back" />
            <RefGroup title="中心参照" id="center" />
            <fieldset className="h-[42px] min-w-0 rounded border border-[#d5dfe5] pr-[6px] pl-[7px]">
              <legend className="ml-[6px] px-[3px] text-[12px] leading-3">深度</legend>
              <div className="mt-[2px] flex gap-[7px]">
                <input aria-label="深度" disabled value="1" className="h-5 w-[149px] border border-[#abadb3] bg-[#aecbea] px-1 text-[12px] leading-4 text-[#777] shadow-[inset_0_0_0_1px_#fff]" />
                <input aria-label="单位" disabled value="mm" className="h-5 min-w-0 flex-1 border border-[#abadb3] bg-[#aecbea] px-[3px] text-[12px] leading-4 text-[#777] shadow-[inset_0_0_0_1px_#fff]" />
              </div>
            </fieldset>
          </fieldset>
        </div>
        <div className="mt-2 flex justify-end gap-[10px] pr-[5px]">
          <PushButton primary>确定</PushButton>
          <PushButton>取消</PushButton>
        </div>
      </div>
    </section>
  );
}

function SelectDialog() {
  return (
    <section
      role="dialog"
      aria-label="选取"
      className="absolute top-[490px] left-[744px] w-[138px] rounded-lg border border-[#39434c] bg-[#d6e4f1] px-[6px] pb-[6px] shadow-[inset_0_0_0_1px_#f3f8fc,2px_2px_7px_1px_rgba(0,0,0,0.65)]"
    >
      <div className="flex h-[25px] items-start justify-between">
        <div className={`flex h-[25px] items-center gap-[6px] pl-[2px] ${ui}`}>
          <WindowMark />
          <h2 className="text-[12px] leading-4 text-[#343c44]">选取</h2>
        </div>
        <button type="button" aria-label="关闭" className="flex h-4 w-[42px] items-center justify-center rounded-b border border-t-0 border-[#76828e]">
          <CloseGlyph />
        </button>
      </div>
      <div className={`border border-[#505a64] bg-[#efefef] pb-[3px] ${ming}`}>
        <p className="pl-1 text-[12px] leading-4 whitespace-nowrap text-black">
          选取1个或多个项目<span className="font-['Noto_Sans_CJK_TC',sans-serif]">。</span>
        </p>
        <div className="mt-[2px] flex justify-between pr-[12px] pl-[11px]">
          <PushButton>确定</PushButton>
          <PushButton>取消</PushButton>
        </div>
      </div>
    </section>
  );
}

function Annotations() {
  return (
    <div className="pointer-events-none absolute inset-0 overflow-hidden">
      <svg viewBox="0 0 957 771" width="957" height="771" fill="none" className="absolute top-0 left-0 drop-shadow-[4px_5px_2px_rgba(0,0,0,0.4)]">
        <g stroke="#c00000" strokeWidth="2">
          <rect x="617" y="80" width="57" height="25" />
          <rect x="657" y="124" width="81" height="16" />
          <rect x="925" y="116" width="26" height="32" />
        </g>
        <g stroke="#ff9900" strokeWidth="3">
          <path d="M516 163C470 178 465 176 433 189C410 199 395 210 370 233" />
          <path d="M707 148L600 217Q545 251 473 268Q430 275 390 276" />
          <path d="M943 105L912 68C890 44 860 38 845 34L775 21" />
          <path d="M683 88C705 89 719 88 723 91Q730 97 730 112" />
          <path d="M747 132L772 200C785 236 798 262 813 302C824 330 828 380 838 446" />
        </g>
        <g fill="#ff9900">
          <path d="M361 241L366 225L376 236Z" />
          <path d="M378 277L392 270V284Z" />
          <path d="M761 18L777 13L774 28Z" />
          <path d="M731 124L723 109L738 107Z" />
          <path d="M839 458L831 445L846 443Z" />
        </g>
      </svg>
      <p className="absolute top-[113px] left-[397px] w-[196px] text-[16px] leading-5 text-[#f00000]">此一平面是在建模时制作的一个小平面，以利制作凸轮平面</p>
      <p className="absolute top-[123px] left-[823px] text-[16px] leading-5 whitespace-nowrap text-[#f00000]">建立凸轮定义</p>
      <div className="absolute top-[717px] right-[8px] w-[92px] text-center text-[#1cb0e4]">
        <p className="text-[30px] leading-8 font-bold whitespace-nowrap">三维网</p>
        <p className="text-[15px] leading-[14px]">3DPortal.cn</p>
      </div>
    </div>
  );
}

export default function App() {
  return (
    <main className={`relative flex min-h-screen flex-col overflow-hidden bg-[#262c33] pb-[3px] ${ui}`}>
      <div className="flex flex-1 flex-col border-b border-[#8fa4b6] bg-[linear-gradient(#7d8f9f,#5f7d96_60px,#bcd6ec_120px,#d3e6f6)] pr-1 pb-[5px] pl-1">
        <TitleBar />
        <div className="flex flex-1 flex-col border-x border-b border-[#59646e] bg-[#efefef]">
          <MenuBar />
          <ToolBar />
          <div className="flex min-h-[608px] flex-1">
            <LeftBar />
            <div className="flex min-w-0 flex-1 self-stretch">
              <Viewport />
            </div>
            <ModelTree />
            <RightBar />
          </div>
          <Messages />
          <StatusBar />
        </div>
      </div>
      <CamDialog />
      <SelectDialog />
      <Annotations />
    </main>
  );
}
